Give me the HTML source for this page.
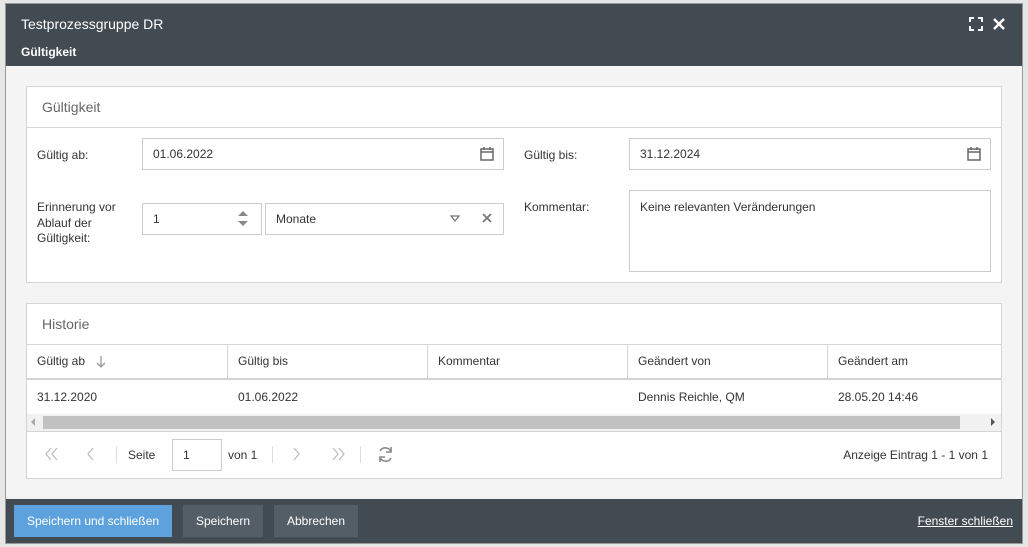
<!DOCTYPE html>
<html><head><meta charset="utf-8"><style>
*{box-sizing:border-box;margin:0;padding:0}
body{width:1028px;height:547px;background:#e6e6e6;font-family:"Liberation Sans",sans-serif;font-size:12px;color:#333;position:relative;overflow:hidden}
.a{position:absolute}
.dlg{left:6px;top:4px;width:1016px;height:539px;background:#f4f4f4;box-shadow:0 0 0 1px #999}
.hd{left:6px;top:4px;width:1016px;height:62px;background:#424a52;color:#fff}
.ft{left:6px;top:499px;width:1016px;height:44px;background:#424a52}
.panel{background:#fff;border:1px solid #d4d4d4}
.ph{font-size:14px;color:#666;border-bottom:1px solid #d4d4d4;height:41px;line-height:40px;padding-left:15px}
.inp{background:#fff;border:1px solid #ccc;font-size:12px;line-height:30px;padding-left:10px;color:#333}
.lbl{font-size:12px;color:#333}
.btn{height:32px;line-height:32px;color:#fff;font-size:12px;text-align:center}
.th{top:345px;height:34px;line-height:33px;padding-left:10px;border-right:1px solid #d4d4d4;font-size:12px}
.td{top:380px;height:34px;line-height:34px;padding-left:10px;font-size:12px}
</style></head><body>
<div class="a dlg"></div>
<div class="a hd">
 <div class="a" style="left:15px;top:12px;font-size:14px">Testprozessgruppe DR</div>
 <div class="a" style="left:15px;top:41px;font-size:12px;font-weight:bold">Gültigkeit</div>
 <svg class="a" style="left:963px;top:13px" width="14" height="14" viewBox="0 0 14 14" fill="none" stroke="#fff" stroke-width="2"><path d="M1 5V1h4M9 1h4v4M13 9v4H9M5 13H1V9"/></svg>
 <svg class="a" style="left:987px;top:14px" width="12" height="12" viewBox="0 0 12 12" stroke="#fff" stroke-width="2.5"><path d="M1 1l10 10M11 1L1 11"/></svg>
</div>

<div class="a panel" style="left:26px;top:86px;width:976px;height:197px">
 <div class="ph">Gültigkeit</div>
</div>
<div class="a lbl" style="left:37px;top:148px">Gültig ab:</div>
<div class="a inp" style="left:142px;top:138px;width:362px;height:32px">01.06.2022</div>
<svg class="a" style="left:480px;top:146px" width="14" height="15" viewBox="0 0 14 15" fill="none" stroke="#666" stroke-width="1.5"><rect x="1" y="3" width="12" height="11"/><path d="M1 6h12M4 1v3M10 1v3"/></svg>
<div class="a lbl" style="left:524px;top:148px">Gültig bis:</div>
<div class="a inp" style="left:629px;top:138px;width:362px;height:32px">31.12.2024</div>
<svg class="a" style="left:967px;top:146px" width="14" height="15" viewBox="0 0 14 15" fill="none" stroke="#666" stroke-width="1.5"><rect x="1" y="3" width="12" height="11"/><path d="M1 6h12M4 1v3M10 1v3"/></svg>
<div class="a lbl" style="left:37px;top:200px;line-height:15.5px">Erinnerung vor<br>Ablauf der<br>Gültigkeit:</div>
<div class="a inp" style="left:142px;top:203px;width:120px;height:32px">1</div>
<svg class="a" style="left:238px;top:210px" width="10" height="17" viewBox="0 0 10 17" fill="#888"><path d="M0 6L5 1l5 5zM0 11l5 5 5-5z"/></svg>
<div class="a inp" style="left:265px;top:203px;width:239px;height:32px">Monate</div>
<svg class="a" style="left:450px;top:215px" width="10" height="7" viewBox="0 0 10 7" fill="none" stroke="#777" stroke-width="1.2"><path d="M1 1h8L5 6z"/></svg>
<svg class="a" style="left:482px;top:213px" width="10" height="10" viewBox="0 0 10 10" stroke="#777" stroke-width="1.8"><path d="M1 1l8 8M9 1L1 9"/></svg>
<div class="a lbl" style="left:524px;top:200px">Kommentar:</div>
<div class="a inp" style="left:629px;top:190px;width:362px;height:82px;line-height:normal;padding-top:9px">Keine relevanten Veränderungen</div>

<div class="a panel" style="left:26px;top:303px;width:976px;height:176px">
 <div class="ph">Historie</div>
</div>
<div class="a" style="left:27px;top:344px;width:974px;height:36px;border-top:1px solid #d4d4d4;border-bottom:2px solid #d4d4d4"></div>
<div class="a th" style="left:27px;width:201px">Gültig ab</div>
<svg class="a" style="left:96px;top:355px" width="10" height="14" viewBox="0 0 10 14" fill="none" stroke="#999" stroke-width="1.3"><path d="M5 1v11M1 8l4 4 4-4"/></svg>
<div class="a th" style="left:228px;width:200px">Gültig bis</div>
<div class="a th" style="left:428px;width:200px">Kommentar</div>
<div class="a th" style="left:628px;width:200px">Geändert von</div>
<div class="a th" style="left:828px;width:173px;border-right:none">Geändert am</div>
<div class="a td" style="left:27px">31.12.2020</div>
<div class="a td" style="left:228px">01.06.2022</div>
<div class="a td" style="left:628px">Dennis Reichle, QM</div>
<div class="a td" style="left:828px">28.05.20 14:46</div>
<div class="a" style="left:27px;top:414px;width:974px;height:17px;background:#f1f1f1"></div>
<div class="a" style="left:43px;top:416px;width:917px;height:13px;background:#c1c1c1"></div>
<div class="a" style="left:31px;top:418px;width:0;height:0;border:4px solid transparent;border-right:4px solid #aaa;border-left:none"></div>
<div class="a" style="left:991px;top:418px;width:0;height:0;border:4px solid transparent;border-left:4px solid #555;border-right:none"></div>
<div class="a" style="left:27px;top:431px;width:974px;height:1px;background:#d4d4d4"></div>
<svg class="a" style="left:44px;top:447px" width="16" height="14" viewBox="0 0 16 14" fill="none" stroke="#bbb" stroke-width="1.2"><path d="M7 1L2 7l5 6M13 1L8 7l5 6"/></svg>
<svg class="a" style="left:86px;top:447px" width="10" height="14" viewBox="0 0 10 14" fill="none" stroke="#bbb" stroke-width="1.2"><path d="M7 1L2 7l5 6"/></svg>
<div class="a" style="left:116px;top:446px;width:1px;height:17px;background:#ddd"></div>
<div class="a lbl" style="left:128px;top:448px">Seite</div>
<div class="a inp" style="left:172px;top:439px;width:50px;height:32px;line-height:30px">1</div>
<div class="a lbl" style="left:228px;top:448px">von 1</div>
<div class="a" style="left:272px;top:446px;width:1px;height:17px;background:#ddd"></div>
<svg class="a" style="left:291px;top:447px" width="10" height="14" viewBox="0 0 10 14" fill="none" stroke="#bbb" stroke-width="1.2"><path d="M3 1l5 6-5 6"/></svg>
<svg class="a" style="left:330px;top:447px" width="16" height="14" viewBox="0 0 16 14" fill="none" stroke="#bbb" stroke-width="1.2"><path d="M3 1l5 6-5 6M9 1l5 6-5 6"/></svg>
<div class="a" style="left:360px;top:446px;width:1px;height:17px;background:#ddd"></div>
<svg class="a" style="left:377px;top:446px" width="17" height="17" viewBox="0 0 17 17" fill="none" stroke="#888" stroke-width="1.6"><path d="M14 6A6 6 0 0 0 3 5M3 11a6 6 0 0 0 11 1"/><path d="M14 1v5H9M3 16v-5h5"/></svg>
<div class="a lbl" style="left:832px;top:448px;width:156px;text-align:right">Anzeige Eintrag 1 - 1 von 1</div>

<div class="a ft">
 <div class="a btn" style="left:8px;top:6px;width:158px;background:#5ea2dd">Speichern und schließen</div>
 <div class="a btn" style="left:177px;top:6px;width:80px;background:#535e67">Speichern</div>
 <div class="a btn" style="left:268px;top:6px;width:84px;background:#535e67">Abbrechen</div>
 <div class="a" style="left:880px;top:15px;width:127px;text-align:right;color:#fff;font-size:12px;text-decoration:underline">Fenster schließen</div>
</div>
</body></html>
